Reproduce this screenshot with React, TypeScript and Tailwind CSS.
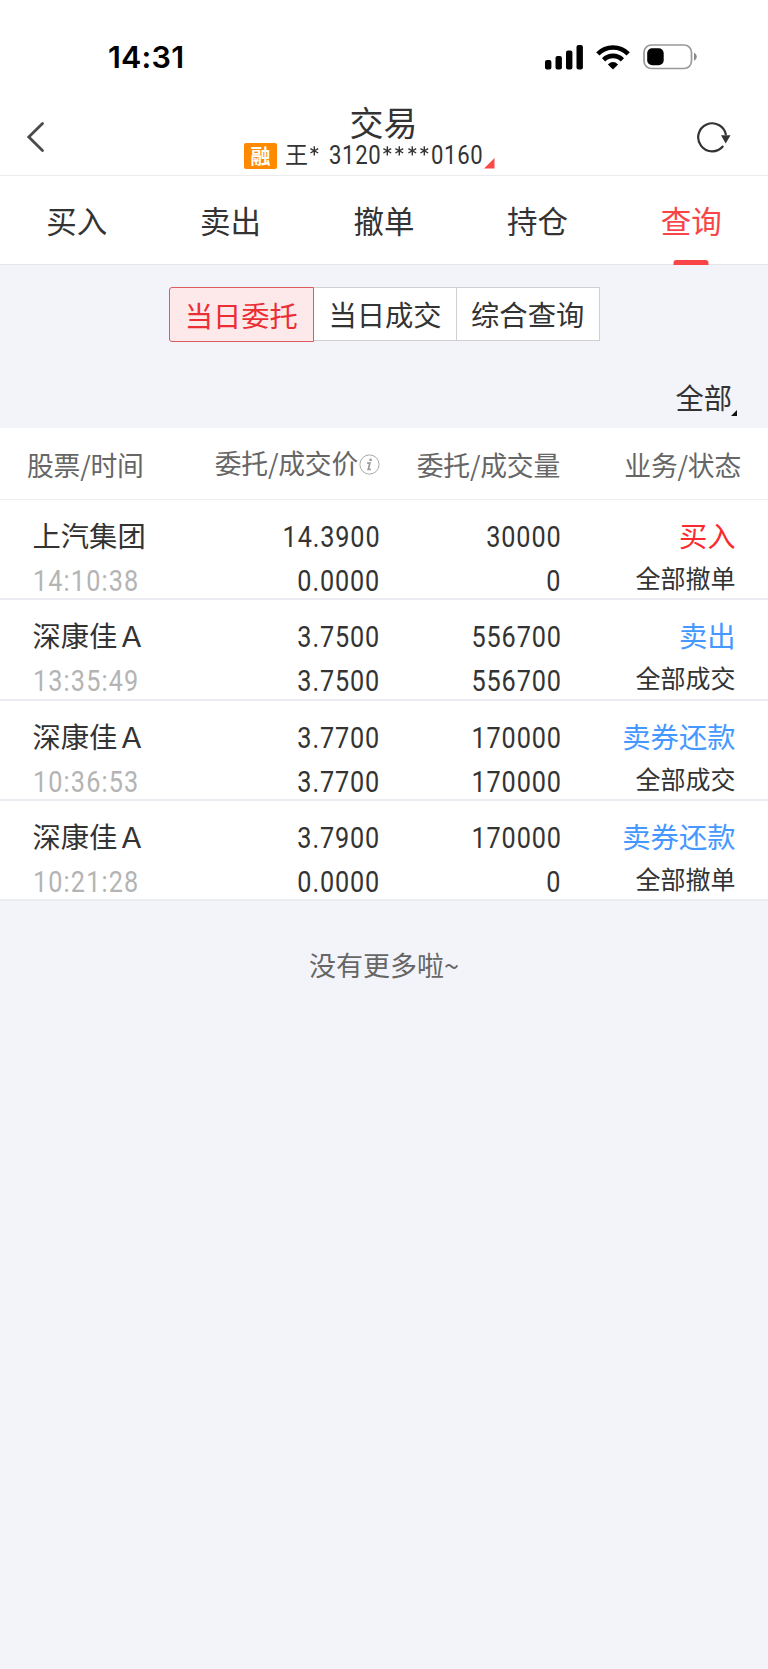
import clsx from 'clsx'
import type { ReactNode } from 'react'

type Order = {
  name: string
  time: string
  price: string
  dealPrice: string
  amount: string
  dealAmount: string
  business: string
  side: 'buy' | 'sell'
  status: string
}

const tabs = ['买入', '卖出', '撤单', '持仓', '查询']

const segments = ['当日委托', '当日成交', '综合查询']

const orders: Order[] = [
  {
    name: '上汽集团',
    time: '14:10:38',
    price: '14.3900',
    dealPrice: '0.0000',
    amount: '30000',
    dealAmount: '0',
    business: '买入',
    side: 'buy',
    status: '全部撤单',
  },
  {
    name: '深康佳Ａ',
    time: '13:35:49',
    price: '3.7500',
    dealPrice: '3.7500',
    amount: '556700',
    dealAmount: '556700',
    business: '卖出',
    side: 'sell',
    status: '全部成交',
  },
  {
    name: '深康佳Ａ',
    time: '10:36:53',
    price: '3.7700',
    dealPrice: '3.7700',
    amount: '170000',
    dealAmount: '170000',
    business: '卖券还款',
    side: 'sell',
    status: '全部成交',
  },
  {
    name: '深康佳Ａ',
    time: '10:21:28',
    price: '3.7900',
    dealPrice: '0.0000',
    amount: '170000',
    dealAmount: '0',
    business: '卖券还款',
    side: 'sell',
    status: '全部撤单',
  },
]

function StatusBar() {
  return (
    <div className="flex h-[100px] items-start justify-between pt-[38px] pr-[70px] pl-[108px]">
      <span className="font-['Inter'] text-[30.5px] leading-[38px] font-semibold tracking-[0.2px] text-black">
        14:31
      </span>
      <div className="flex items-center pt-[6px]">
        <svg width="39" height="25" viewBox="0 0 39 25">
          <rect x="0" y="15" width="6.4" height="9.5" rx="2" />
          <rect x="10.5" y="11" width="6.4" height="13.5" rx="2" />
          <rect x="21" y="5.5" width="6.4" height="19" rx="2" />
          <rect x="31.5" y="0" width="6.4" height="24.5" rx="2" />
        </svg>
        <svg className="ml-[12px]" width="34" height="25" viewBox="0 0 34 25">
          <g fill="none" stroke="#000" strokeWidth="4.6">
            <path d="M1.8 8.9C10.2 .4 23.8 .4 32.2 8.9" />
            <path d="M7.6 14.8C12.8 9.6 21.2 9.6 26.4 14.8" />
          </g>
          <path d="M17 24.6L11.9 19.4Q17 14.8 22.1 19.4Z" />
        </svg>
        <svg className="ml-[13px]" width="55" height="26" viewBox="0 0 55 26">
          <rect x="1" y="1" width="47.5" height="23.5" rx="7.5" fill="none" stroke="#999" strokeWidth="1.7" />
          <rect x="4.2" y="4.2" width="16.5" height="17" rx="5" />
          <path d="M51 8.8Q53.8 10 53.8 12.8Q53.8 15.6 51 16.8Z" fill="#8a8a8a" />
        </svg>
      </div>
    </div>
  )
}

function Header() {
  return (
    <header className="flex h-[76px] items-start justify-between border-b border-[#ececee] pr-[36px] pl-[26px]">
      <svg className="mt-[21px]" width="20" height="32" viewBox="0 0 20 32">
        <path d="M16.5 2.5L2.8 16L16.5 29.5" fill="none" stroke="#4a4a4a" strokeWidth="2.8" strokeLinecap="round" />
      </svg>
      <div className="mr-[3px] flex flex-col items-center">
        <h1 className="mt-[4px] ml-[28px] text-[34px] leading-[36px]">交易</h1>
        <div className="mt-[3px] flex h-[26px] items-center">
          <span className="mr-[8px] grid h-[26px] w-[33px] place-items-center rounded-[2px] bg-[#ff8a00] text-[20px] leading-none font-bold text-white">
            融
          </span>
          <span className="mb-[5px] text-[23px] leading-none">王</span>
          <Star />
          <span className="w-[8px]" />
          <AccountDigits>3120</AccountDigits>
          <Star />
          <Star />
          <Star />
          <Star />
          <AccountDigits>0160</AccountDigits>
          <svg className="mt-[14px] ml-[1px]" width="11" height="11" viewBox="0 0 11 11">
            <path d="M10.5 0V10.5H0Z" fill="#fa4a4a" />
          </svg>
        </div>
      </div>
      <svg className="mt-[20px]" width="36" height="34" viewBox="0 0 36 34">
        <path d="M27.2 26A14 14 0 1 1 30 15" fill="none" stroke="#333" strokeWidth="2.2" />
        <path d="M25 15.2H34.5L29.7 23.5Z" fill="#333" />
      </svg>
    </header>
  )
}

function Star() {
  return (
    <svg width="12.6" height="26" viewBox="0 0 12.6 26">
      <path d="M6.3 3.2V12.4M2.4 5.6L10.2 10M10.2 5.6L2.4 10" stroke="#333" strokeWidth="1.4" />
    </svg>
  )
}

function AccountDigits({ children }: { children: ReactNode }) {
  return (
    <span className="mb-[2px] w-[52px]">
      <span className="inline-block origin-left scale-x-[.87] font-['Roboto'] text-[25.4px] leading-[26px] tracking-[0.8px]">
        {children}
      </span>
    </span>
  )
}

// Roboto squeezed sideways, for the narrow digits of a quote table
function Num({ children, left }: { children: ReactNode; left?: boolean }) {
  return (
    <span
      className={clsx(
        "inline-block scale-x-[.87] font-['Roboto'] text-[29px] leading-[44px]",
        left ? 'origin-left tracking-[1.3px] text-[#b4b4b4]' : 'origin-right tracking-[1px]',
      )}
    >
      {children}
    </span>
  )
}

function OrderRow({ order }: { order: Order }) {
  return (
    <div className="grid h-[100.3px] grid-cols-[168px_180px_181px_174px] border-b-2 border-[#ebebf2] bg-white pt-[15px] pl-[32.5px]">
      <div className="flex flex-col items-start">
        <span className="mt-[-2px] mb-[2px] text-[28.3px] leading-[44px]">{order.name}</span>
        <Num left>{order.time}</Num>
      </div>
      <div className="flex flex-col items-end">
        <Num>{order.price}</Num>
        <Num>{order.dealPrice}</Num>
      </div>
      <div className="flex flex-col items-end">
        <Num>{order.amount}</Num>
        <Num>{order.dealAmount}</Num>
      </div>
      <div className="flex flex-col items-end">
        <span
          className={clsx(
            'mt-[-2px] text-[28.3px] leading-[44px]',
            order.side === 'buy' ? 'text-[#fa2a2d]' : 'text-[#4598ff]',
          )}
        >
          {order.business}
        </span>
        <span className="text-[25px] leading-[40px]">{order.status}</span>
      </div>
    </div>
  )
}

export default function App() {
  return (
    <div className="min-h-[1669px] w-[768px] bg-[#f3f4f9] font-['Noto_Sans_CJK_SC',sans-serif] text-[#333]">
      <div className="bg-white">
        <StatusBar />
        <Header />
        <nav className="grid h-[89px] grid-cols-5 border-b border-[#e4e5eb]">
          {tabs.map((tab) => (
            <button
              key={tab}
              className={clsx(
                'relative pb-[1px] text-[30.5px] leading-[80px]',
                tab === '查询' && 'text-[#fa4548]',
              )}
            >
              {tab}
              {tab === '查询' && (
                <span className="absolute bottom-[-1px] left-1/2 h-[5px] w-[35px] -translate-x-1/2 rounded-t-[3px] bg-[#fa4548]" />
              )}
            </button>
          ))}
        </nav>
      </div>

      <div className="flex h-[163px] flex-col items-center pt-[22px]">
        <div className="flex h-[55px] w-[431px] items-start">
          {segments.map((label, i) => (
            <button
              key={label}
              className={clsx(
                'border text-[28.3px] leading-[52px]',
                i === 0
                  ? 'h-[55px] w-[146px] rounded-l-[3px] border-[#dd5a5e] bg-[#fde9ea] text-[#ea2e33]'
                  : 'h-[54px] w-[143px] border-l-0 border-[#d0d0d3] bg-white',
              )}
            >
              {label}
            </button>
          ))}
        </div>
        <div className="mt-[33px] flex self-end pr-[30px]">
          <span className="text-[28.3px] leading-[44px]">全部</span>
          <svg className="mt-[35px] ml-[-1px]" width="7" height="7" viewBox="0 0 7 7">
            <path d="M6 0V6H0Z" fill="#111" />
          </svg>
        </div>
      </div>

      <div className="grid h-[72px] grid-cols-[173px_180px_180px_181px] border-b border-[#ededf1] bg-white pl-[27px] text-[26.8px] leading-[74px] tracking-[-0.2px] text-[#666]">
        <span>股票/时间</span>
        <span className="flex h-[71px] items-center justify-end">
          <span className="mt-[-2px]">委托/成交价</span>
          <svg className="mt-[1px] ml-[1px]" width="21" height="21" viewBox="0 0 21 21">
            <circle cx="10.5" cy="10.5" r="9.6" fill="none" stroke="#aaa" />
            <circle cx="11.6" cy="5.9" r="1.3" fill="#999" />
            <path d="M8.2 9.1H10.9L9.2 15.3H11.8" fill="none" stroke="#999" strokeWidth="1.7" />
          </svg>
        </span>
        <span className="text-right">委托/成交量</span>
        <span className="text-right">业务/状态</span>
      </div>

      {orders.map((order) => (
        <OrderRow key={order.time} order={order} />
      ))}

      <p className="pt-[42px] text-center text-[27px] leading-[44px] text-[#666]">没有更多啦~</p>
    </div>
  )
}
